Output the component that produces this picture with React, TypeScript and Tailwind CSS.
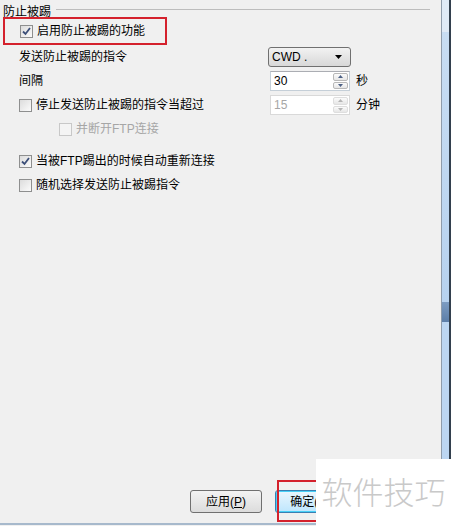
import type { ReactNode } from 'react';

const font = { fontFamily: '"Liberation Sans", "Noto Sans CJK SC", sans-serif' };

const Check = ({ checked = false, disabled = false }: { checked?: boolean; disabled?: boolean }) => (
  <span
    className={`flex w-[13px] h-[13px] shrink-0 items-center justify-center border ${
      disabled ? 'border-[#c8c8c8] bg-[#f4f4f4]' : 'border-[#8e8f8f] bg-gradient-to-br from-[#dcdcdc] to-[#fbfbfb]'
    }`}
  >
    {checked && (
      <svg width="9" height="9" viewBox="0 0 9 9">
        <path d="M1 4.5 L3.5 7 L8 1" fill="none" stroke="#3c4f79" strokeWidth="1.8" />
      </svg>
    )}
  </span>
);

const Spinner = ({ value, disabled = false }: { value: string; disabled?: boolean }) => (
  <div
    className={`flex w-[80px] h-[20px] items-stretch border bg-white ${
      disabled ? 'border-[#d9d9d9]' : 'border-[#c5cfd8] border-t-[#abadb3]'
    }`}
  >
    <span className={`flex-1 pl-[3px] leading-[18px] ${disabled ? 'text-[#a6a6a6]' : 'text-black'}`}>{value}</span>
    <div className="flex flex-col w-[15px] my-[1px] mr-[1px] gap-[1px]">
      {[0, 1].map((i) => (
        <span
          key={i}
          className={`flex flex-1 items-center justify-center rounded-[2px] border bg-gradient-to-b from-[#fbfbfb] to-[#e6e6e6] ${
            disabled ? 'border-[#dedede]' : 'border-[#b8b8b8]'
          }`}
        >
          <svg width="5" height="3" viewBox="0 0 5 3">
            <path d={i === 0 ? 'M0 3 L2.5 0 L5 3 Z' : 'M0 0 L2.5 3 L5 0 Z'} fill={disabled ? '#b5b5b5' : '#4d6185'} />
          </svg>
        </span>
      ))}
    </div>
  </div>
);

const Row = ({ children, className = '' }: { children: ReactNode; className?: string }) => (
  <div className={`flex h-[24px] items-center ${className}`}>{children}</div>
);

const App = () => {
  return (
    <div
      className="relative flex w-[451px] h-[526px] overflow-hidden bg-[#f0f0f0] text-[12px] text-black"
      style={font}
    >
      <div className="flex flex-1 flex-col">
        {/* group title */}
        <div className="relative h-[17px]">
          <span className="absolute left-[3px] top-[5px] leading-[14px]">防止被踢</span>
          <span className="absolute left-[56px] right-[11px] top-[9px] h-px bg-[#bdbdbd]" />
        </div>

        <div className="ml-[3px] flex h-[28px] w-[164px] items-center gap-[4px] border-2 border-[#d4212c] pl-[15px]">
          <Check checked />
          <span>启用防止被踢的功能</span>
        </div>

        <Row className="pl-[19px]">
          <span className="w-[249px]">发送防止被踢的指令</span>
          <div className="flex h-[20px] w-[83px] items-center justify-between rounded-[3px] border border-[#707070] bg-gradient-to-b from-[#f2f2f2] to-[#d8d8d8] px-[3px]">
            <span>CWD .</span>
            <svg width="7" height="4" viewBox="0 0 7 4" className="mr-[5px]">
              <path d="M0 0 L7 0 L3.5 4 Z" fill="#000" />
            </svg>
          </div>
        </Row>

        <Row className="pl-[19px]">
          <span className="w-[251px]">间隔</span>
          <Spinner value="30" />
          <span className="ml-[6px]">秒</span>
        </Row>

        <Row className="pl-[19px]">
          <span className="flex w-[251px] items-center gap-[4px]">
            <Check />
            <span>停止发送防止被踢的指令当超过</span>
          </span>
          <Spinner value="15" disabled />
          <span className="ml-[6px]">分钟</span>
        </Row>

        <Row className="pl-[59px] gap-[4px] text-[#a6a6a6]">
          <Check disabled />
          <span>并断开FTP连接</span>
        </Row>

        <Row className="mt-[8px] pl-[19px] gap-[4px]">
          <Check checked />
          <span>当被FTP踢出的时候自动重新连接</span>
        </Row>

        <Row className="pl-[19px] gap-[4px]">
          <Check />
          <span>随机选择发送防止被踢指令</span>
        </Row>

        <div className="flex-1" />

        <div className="flex h-[23px] items-center gap-[13px] pl-[190px]">
          <button className="h-[23px] w-[72px] rounded-[3px] border border-[#707070] bg-gradient-to-b from-[#f3f3f3] to-[#dcdcdc]">
            应用(<u>P</u>)
          </button>
          <button className="h-[23px] w-[72px] rounded-[3px] border border-[#3c7fb1] bg-gradient-to-b from-[#eaf6fd] to-[#bee6fd] shadow-[inset_0_0_0_1px_#48d0f7]">
            确定(<u>O</u>)
          </button>
        </div>
        <div className="mt-[10px] h-[2px] bg-[#a7b9cc]" />
        <div className="h-[1px]" />
      </div>

      {/* window frame edge */}
      <div className="flex w-[10px] flex-col border-l border-[#8f9cab]">
        <div className="flex flex-1 flex-col border-r-2 border-[#33404e]">
          <div className="h-[32px] bg-[#dfeaf6]" />
          <div className="h-[270px] bg-gradient-to-b from-[#c8ddf3] to-[#b7d2ef]" />
          <div className="h-[20px] bg-gradient-to-b from-[#7d9cc2] to-[#5c7ea8]" />
          <div className="flex-1 bg-[#bcd6f2]" />
        </div>
      </div>

      {/* highlight + watermark overlays */}
      <div className="absolute left-[277px] top-[480px] h-[42px] w-[60px] border-2 border-[#d4212c]" />
      <div className="absolute bottom-0 right-0 flex h-[67px] w-[135px] items-center justify-center bg-white">
        <span className="text-[31px] font-light leading-none text-[#c9c9c9] -mt-[4px]" style={{ fontFamily: '"Noto Sans CJK SC", sans-serif' }}>
          软件技巧
        </span>
      </div>
    </div>
  );
};

export default App;
